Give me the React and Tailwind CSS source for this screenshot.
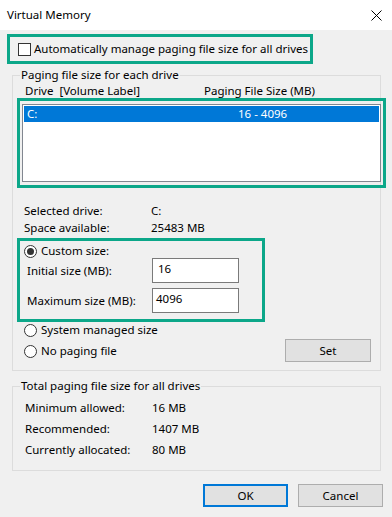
import React from "react";

const font = { fontFamily: '"Noto Sans", "Open Sans", sans-serif' };

function Radio({ checked }) {
  return (
    <span className="flex h-[13px] w-[13px] shrink-0 items-center justify-center rounded-full border border-[#333333] bg-white">
      {checked && <span className="h-[7px] w-[7px] rounded-full bg-[#333333]" />}
    </span>
  );
}

function Button({ children, primary, className = "" }) {
  return (
    <div
      className={
        "flex h-[23px] items-center justify-center bg-[#e1e1e1] text-black " +
        (primary ? "border-2 border-[#0078d7] " : "border border-[#adadad] ") +
        className
      }
    >
      {children}
    </div>
  );
}

export default function App() {
  return (
    <div className="h-[517px] w-[392px] overflow-hidden bg-[#f0f0f0] text-[11.5px] leading-[16px] text-black" style={font}>
      {/* Title bar */}
      <div className="flex h-[30px] items-center justify-between bg-white pl-[7px] pr-[9px]">
        <span className="leading-[16px]">Virtual Memory</span>
        <svg width="11" height="11" viewBox="0 0 11 11" className="mr-[1px]">
          <path d="M0.5 0.5 L10.5 10.5 M10.5 0.5 L0.5 10.5" stroke="#000" strokeWidth="1" />
        </svg>
      </div>

      {/* Auto manage */}
      <div className="ml-[7px] mt-[4px] flex h-[30px] w-[306px] items-center border-[3px] border-[#0ca789] pl-[8px]">
        <span className="h-[13px] w-[13px] shrink-0 border border-[#333333] bg-white" />
        <span className="ml-[3px] whitespace-nowrap">Automatically manage paging file size for all drives</span>
      </div>

      {/* Paging file size for each drive */}
      <fieldset className="ml-[12px] mt-[3px] w-[369px] min-w-0 border border-[#dcdcdc]">
        <legend className="ml-[7px] px-[1px] leading-[16px]">Paging file size for each drive</legend>
        <div className="flex h-[15px] items-start pl-[12px] leading-[15px]">
          <span className="w-[179px] whitespace-pre">Drive  [Volume Label]</span>
          <span>Paging File Size (MB)</span>
        </div>
        <div className="ml-[4px] h-[90px] w-[369px] border-[3px] border-[#0ca789] px-[2px] py-[3px]">
          <div className="h-[78px] w-full border border-[#828790] bg-white p-[1px]">
            <div className="flex h-[16px] items-center bg-[#0078d7] pl-[3px] text-white">
              <span className="w-[211px]">C:</span>
              <span>16 - 4096</span>
            </div>
          </div>
        </div>

        <div className="mt-[14px] pl-[11px] leading-[17px]">
          <div className="flex">
            <span className="w-[127px]">Selected drive:</span>
            <span>C:</span>
          </div>
          <div className="flex">
            <span className="w-[127px]">Space available:</span>
            <span>25483 MB</span>
          </div>
        </div>

        <div className="ml-[4px] mt-[2px] h-[84px] w-[248px] border-[3px] border-[#0ca789] pl-[4px] pt-[3px]">
          <div className="flex h-[14px] items-center gap-[4px]">
            <Radio checked />
            <span>Custom size:</span>
          </div>
          <div className="flex h-[25px] items-center pl-[3px]">
            <span className="w-[125px]">Initial size (MB):</span>
            <div className="flex h-[25px] w-[87px] items-center border border-[#7a7a7a] bg-white pb-[3px] pl-[5px]">16</div>
          </div>
          <div className="mt-[5px] flex h-[25px] items-center pl-[3px]">
            <span className="w-[125px]">Maximum size (MB):</span>
            <div className="flex h-[25px] w-[87px] items-center border border-[#7a7a7a] bg-white pb-[3px] pl-[3px]">4096</div>
          </div>
        </div>

        <div className="flex h-[48px] items-start justify-between pl-[11px] pr-[9px]">
          <div className="flex flex-col gap-[5px]">
            <div className="flex h-[16px] items-center gap-[4px]">
              <Radio />
              <span>System managed size</span>
            </div>
            <div className="flex h-[16px] items-center gap-[4px]">
              <Radio />
              <span>No paging file</span>
            </div>
          </div>
          <Button className="mt-[17px] w-[86px]">Set</Button>
        </div>
      </fieldset>

      {/* Total */}
      <fieldset className="ml-[12px] mt-[7px] w-[369px] min-w-0 border border-[#dcdcdc] pb-[10px] pl-[12px] pt-[3px]">
        <legend className="-ml-[5px] px-[1px] leading-[16px]">Total paging file size for all drives</legend>
        <div className="leading-[21px]">
          <div className="flex">
            <span className="w-[127px]">Minimum allowed:</span>
            <span>16 MB</span>
          </div>
          <div className="flex">
            <span className="w-[127px]">Recommended:</span>
            <span>1407 MB</span>
          </div>
          <div className="flex">
            <span className="w-[127px]">Currently allocated:</span>
            <span>80 MB</span>
          </div>
        </div>
      </fieldset>

      <div className="mt-[13px] flex justify-end gap-[10px] pr-[9px]">
        <Button primary className="w-[85px]">OK</Button>
        <Button className="w-[85px]">Cancel</Button>
      </div>
    </div>
  );
}
